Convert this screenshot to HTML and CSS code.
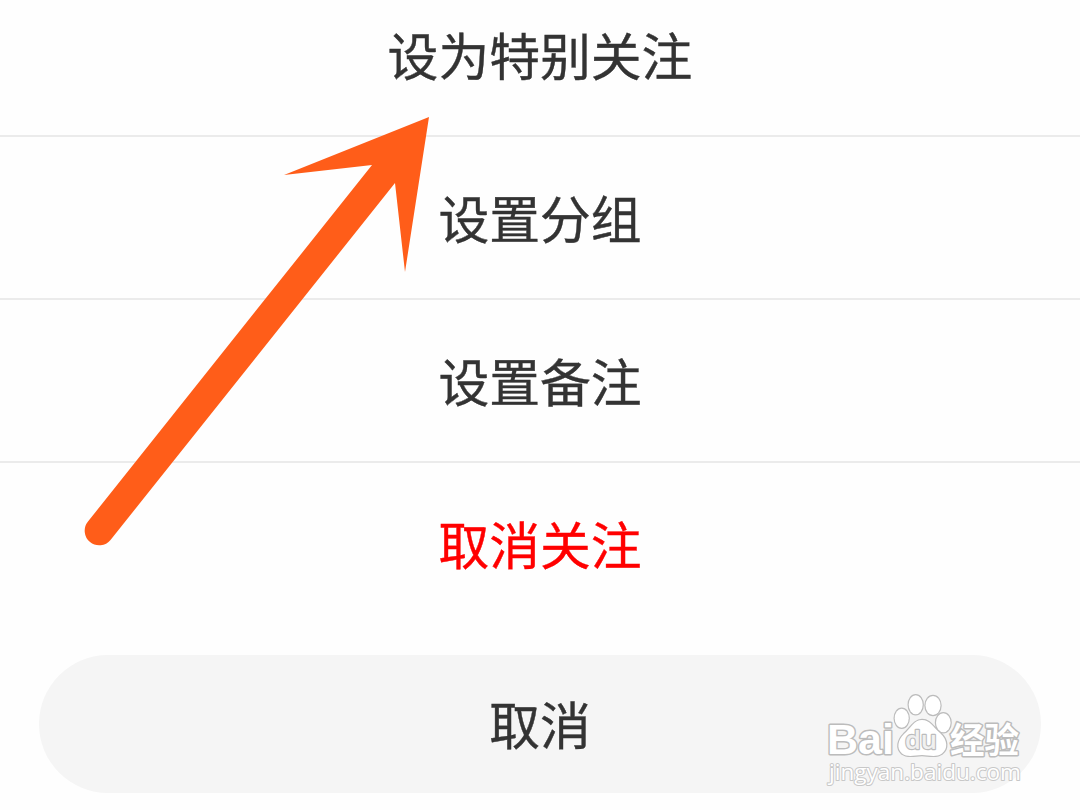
FILE: index.html
```html
<!DOCTYPE html>
<html lang="zh-CN">
<head>
    <meta charset="UTF-8">
    <meta name="viewport" content="width=device-width, initial-scale=1.0">
    <title>关注设置</title>
    <link rel="stylesheet" href="styles.css">
</head>
<body>
    <div class="sheet">
        <div class="item">设为特别关注</div>
        <div class="item">设置分组</div>
        <div class="item">设置备注</div>
        <div class="item danger">取消关注</div>
        <button class="cancel">取消</button>
    </div>

    <svg class="arrow" width="1080" height="810" viewBox="0 0 1080 810">
        <path d="M429 117 L284 175 L372 165 L88 521.5 A14.5 14.5 0 0 0 110.5 540 L395 183 L405 272 Z"/>
    </svg>

    <svg class="watermark" width="220" height="110" viewBox="820 690 220 110">
        <g class="brand">
            <text x="827" y="754" font-size="43" textLength="67" lengthAdjust="spacingAndGlyphs">Bai</text>
            <text x="950" y="752.5" font-size="35" textLength="69" lengthAdjust="spacingAndGlyphs">经验</text>
        </g>
        <g class="paw">
            <ellipse cx="901.7" cy="718.3" rx="7" ry="9.5"/>
            <ellipse cx="915.7" cy="704.7" rx="7" ry="9.5"/>
            <ellipse cx="933" cy="705.5" rx="7.5" ry="9.5"/>
            <ellipse cx="943.3" cy="722.7" rx="7.3" ry="9.5"/>
            <path d="M922 720 C930 720 933 727 940 733 C948 740 948 749 942 753.5 C936 758 928 755 922 755 C915 755 908 758 902 753.5 C896 748 898 740 904 734 C911 728 914 720 922 720 Z"/>
        </g>
        <text class="du" x="905" y="749" font-size="26" textLength="32" lengthAdjust="spacingAndGlyphs">du</text>
        <text class="url" x="829" y="780" font-size="22" textLength="192" lengthAdjust="spacingAndGlyphs">jingyan.baidu.com</text>
    </svg>
</body>
</html>
```

FILE: styles.css
```css
        body {
            font-family: "Noto Sans CJK SC", sans-serif;
            margin: 0;
            background-color: #fefefe;
            overflow: hidden;
        }

        .sheet {
            height: 810px;
            display: flex;
            flex-direction: column;
            justify-content: flex-end;
            overflow: hidden;
        }

        .item {
            flex: none;
            box-sizing: border-box;
            height: 163px;
            line-height: 161px;
            border-bottom: 2px solid #ebebeb;
            text-align: center;
            font-size: 50.8px;
            color: #333;
            -webkit-text-stroke: 0.4px currentColor;
        }

        .item.danger {
            color: #ff0000;
            border-bottom-color: transparent;
        }

        .cancel {
            flex: none;
            height: 138px;
            margin: 29px 39px 17px;
            padding: 0 0 2px;
            border: none;
            border-radius: 69px;
            background-color: #f5f5f5;
            font-family: inherit;
            font-size: 50.8px;
            color: #333;
            -webkit-text-stroke: 0.4px currentColor;
        }

        .arrow {
            position: absolute;
            top: 0;
            left: 0;
            fill: #ff5d19;
            pointer-events: none;
        }

        .watermark {
            position: absolute;
            left: 820px;
            top: 690px;
            fill: #fff;
            stroke: #bcbcbc;
            stroke-width: 2.4px;
            stroke-linejoin: round;
            paint-order: stroke;
        }

        .watermark .brand {
            font-family: "Liberation Sans", "Noto Sans CJK SC", sans-serif;
            font-weight: bold;
            stroke-width: 3px;
        }

        .watermark .du {
            font-family: "Open Sans", sans-serif;
            font-weight: 600;
            fill: #f0f0f0;
        }

        .watermark .url {
            font-family: "Open Sans", sans-serif;
            stroke: #c8c8c8;
            stroke-width: 2px;
        }
```
